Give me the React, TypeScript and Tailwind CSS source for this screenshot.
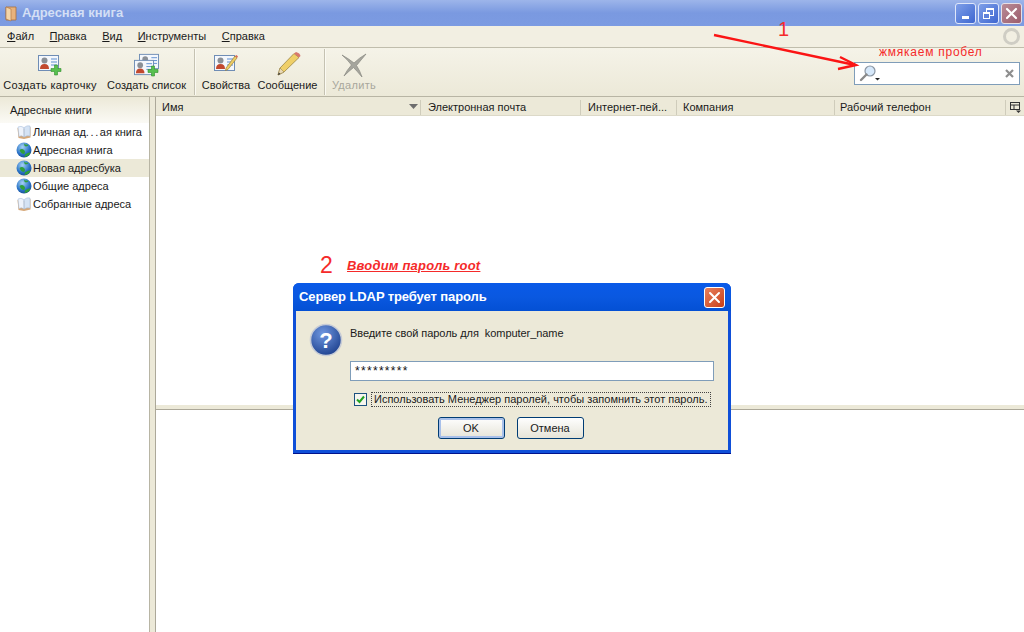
import React from "react";

const font = { fontFamily: '"Liberation Sans", sans-serif' };

function Book() {
  return (
    <svg width="16" height="16" viewBox="0 0 16 16" className="shrink-0">
      <path d="M1.5 4 L8 5 L14.5 3 V13.5 L8 15 L2.5 14 Z" fill="#d6a878" />
      <path d="M2 3 Q5 1.5 7.8 3.5 L8 13 Q5.5 11 3 12.5 Z" fill="#eef3fb" stroke="#a9c0dc" strokeWidth="0.6" />
      <path d="M8.2 3.5 Q11 1 14 2 V12 Q11 11 8.2 13 Z" fill="#d5e3f4" stroke="#a9c0dc" strokeWidth="0.6" />
    </svg>
  );
}

function Globe() {
  return (
    <svg width="16" height="16" viewBox="0 0 16 16" className="shrink-0">
      <defs>
        <radialGradient id="g1" cx="0.4" cy="0.3" r="0.8">
          <stop offset="0" stopColor="#a5d2f5" />
          <stop offset="0.6" stopColor="#2b74c8" />
          <stop offset="1" stopColor="#123f86" />
        </radialGradient>
      </defs>
      <circle cx="8" cy="8" r="7.5" fill="url(#g1)" />
      <path d="M3.5 8 Q6 6 8 8 Q10 10 8 12 Q5 12 3.5 8Z M9 12.5 Q12 10 14.5 10.5 Q13 14.5 8.5 15Z M8 1.5 Q10 3 12 2.6 Q13 4 10 4.5 Q8 4 8 1.5Z" fill="#2fa03a" />
    </svg>
  );
}

function CardIcon({ x = 0 }: { x?: number }) {
  return (
    <g transform={`translate(${x} 0)`}>
      <rect x="0.5" y="2.5" width="20" height="15" fill="#f4f7fc" stroke="#6f8db5" />
      <circle cx="6.5" cy="7.5" r="3" fill="#8a8f96" />
      <path d="M2 16 Q2 11 6.5 11 Q11 11 11 16Z" fill="#c2492f" />
      <path d="M13 6h6M13 9h6M13 12h6" stroke="#5f8fd0" strokeWidth="1" />
    </g>
  );
}

function Plus({ x, y }: { x: number; y: number }) {
  return (
    <path
      transform={`translate(${x} ${y})`}
      d="M3.5 0h3v3.5h3.5v3h-3.5v3.5h-3v-3.5h-3.5v-3h3.5z"
      fill="#58c04e"
      stroke="#2f8f2c"
      strokeWidth="0.6"
    />
  );
}

function NewCard() {
  return (
    <svg width="24" height="24" viewBox="0 0 24 24">
      <CardIcon />
      <Plus x={13} y={12} />
    </svg>
  );
}

function NewList() {
  return (
    <svg width="26" height="24" viewBox="0 0 26 24">
      <g transform="translate(5 -1) scale(0.95)"><CardIcon /></g>
      <g transform="translate(0 5) scale(0.95)"><CardIcon /></g>
      <Plus x={14} y={13} />
    </svg>
  );
}

function Props() {
  return (
    <svg width="24" height="24" viewBox="0 0 24 24">
      <CardIcon />
      <path d="M12 15 L21 3 L23 5 L14 16.5 L11.5 17.5Z" fill="#eccb62" stroke="#8d7430" strokeWidth="0.6" />
      <path d="M21 3 L23 5 L24 3.5 L22.5 2Z" fill="#d86a5a" />
    </svg>
  );
}

function Pencil() {
  return (
    <svg width="26" height="26" viewBox="0 0 26 26">
      <path d="M3 24 L5 17 L19 2.5 L24 6.5 L9 21Z" fill="#efcf68" stroke="#8f7a3a" strokeWidth="0.7" />
      <path d="M5 17 L9 21 L3 24Z" fill="#e9d9b8" stroke="#8f7a3a" strokeWidth="0.5" />
      <path d="M3 24 L3.8 21.5 L5.5 23Z" fill="#333" />
      <path d="M19 2.5 L24 6.5 L25.5 5 Q25 2 21 1Z" fill="#d8786c" />
    </svg>
  );
}

function DelX() {
  return (
    <svg width="26" height="24" viewBox="0 0 26 24">
      <path d="M1 2 Q8 6 13 10 Q18 5 25 1 Q20 7 15.5 12.5 Q19 18 21 24 Q16 18 12.5 14.5 Q8 18 3 23 Q6 17 10.5 12 Q6 6 1 2Z" fill="#a5a59d" stroke="#8e8e86" strokeWidth="0.8" />
    </svg>
  );
}

function Tool({ icon, label, w, disabled, wide }: { icon: React.ReactNode; label: string; w: string; disabled?: boolean; wide?: boolean }) {
  return (
    <div className={`flex flex-col items-center ${w}`}>
      <div className="h-[25px] flex items-end justify-center">{icon}</div>
      <div className={`text-[11px] leading-[13px] mt-[2px] whitespace-nowrap ${wide ? "tracking-[0.3px]" : ""} ${disabled ? "text-[#a8a79c]" : "text-[#1a1a1a]"}`}>{label}</div>
    </div>
  );
}

const Sep = () => <div className="w-[2px] h-[46px] border-l border-[#c5c2b2] bg-[#fbfaf3]" />;

function HeadCell({ label, w, pl }: { label: string; w: string; pl: string }) {
  return (
    <div className={`${w} ${pl} h-full flex items-center relative border-r border-[#cfccbb]`}>
      <span className="text-[11px] text-[#1a1a1a] whitespace-nowrap">{label}</span>
    </div>
  );
}

function TreeRow({ icon, label, sel }: { icon: React.ReactNode; label: React.ReactNode; sel?: boolean }) {
  return (
    <div className={`h-[18px] flex items-center pl-[16px] gap-px ${sel ? "bg-[#ece9d8]" : ""}`}>
      {icon}
      <span className="text-[11px] text-[#1a1a1a] whitespace-nowrap">{label}</span>
    </div>
  );
}

function MenuItem({ u, rest }: { u: string; rest: string }) {
  return (
    <span className="text-[11px] text-[#1a1a1a]">
      <span className="underline">{u}</span>
      {rest}
    </span>
  );
}

export default function App() {
  return (
    <div style={font} className="relative w-[1024px] h-[632px] overflow-hidden bg-white flex flex-col">
      {/* Title bar */}
      <div className="h-[26px] shrink-0 flex items-center pl-[4px] pr-[2px] bg-gradient-to-b from-[#9db5ea] via-[#7a99e0] to-[#7c9be2]">
        <svg width="15" height="17" viewBox="0 0 15 17">
          <path d="M2 2 H12 V15 H2Z" fill="#e8b27c" stroke="#a8703e" strokeWidth="0.8" />
          <path d="M2 2 L7 4 V16 L2 14Z" fill="#f4d4a8" stroke="#a8703e" strokeWidth="0.6" />
        </svg>
        <span className="ml-[3px] text-[13px] font-bold text-[#d3dff5] whitespace-nowrap">Адресная книга</span>
        <div className="ml-auto flex gap-[2px]">
          <div className="w-[21px] h-[21px] rounded-[3px] bg-gradient-to-br from-[#7f9fe8] to-[#3f66d0] border border-[#dfe7fa] flex items-end justify-start pl-[6px] pb-[4px]">
            <div className="w-[7px] h-[3px] bg-white" />
          </div>
          <div className="w-[21px] h-[21px] rounded-[3px] bg-gradient-to-br from-[#7f9fe8] to-[#3f66d0] border border-[#dfe7fa] flex items-center justify-center">
            <svg width="13" height="13" viewBox="0 0 13 13" fill="none" stroke="#fff">
              <rect x="4.5" y="1.5" width="7" height="7" strokeWidth="1" />
              <path d="M4.5 2h7" strokeWidth="2" />
              <rect x="1.5" y="5.5" width="6" height="6" fill="#5f83dc" strokeWidth="1" />
              <path d="M1.5 6h6" strokeWidth="2" />
            </svg>
          </div>
          <div className="w-[21px] h-[21px] rounded-[3px] bg-gradient-to-br from-[#b88c98] to-[#9c5c6c] border border-[#e6dfe6] flex items-center justify-center">
            <svg width="13" height="13" viewBox="0 0 13 13" stroke="#fff" strokeWidth="2.2" strokeLinecap="round">
              <path d="M2 2 L11 11 M11 2 L2 11" />
            </svg>
          </div>
        </div>
      </div>

      {/* Menu */}
      <div className="h-[21px] shrink-0 flex items-center bg-[#f2efe2] pl-[7px] gap-[15.5px] relative">
        <MenuItem u="Ф" rest="айл" />
        <MenuItem u="П" rest="равка" />
        <MenuItem u="В" rest="ид" />
        <MenuItem u="И" rest="нструменты" />
        <MenuItem u="С" rest="правка" />
        <div className="absolute right-[4px] top-[2px] w-[17px] h-[17px] rounded-full border-[3px] border-[#cfcdc4] bg-[#f2efe2]" />
      </div>
      <div className="h-px shrink-0 bg-[#c0bdac]" />

      {/* Toolbar */}
      <div className="h-[49px] shrink-0 flex items-center bg-gradient-to-b from-[#f5f3e8] to-[#ece9d8] border-b border-[#b8b5a4] pr-[4px]">
        <Tool icon={<NewCard />} label="Создать карточку" w="w-[100px]" wide />
        <Tool icon={<NewList />} label="Создать список" w="w-[93px]" />
        <div className="w-[2px] ml-px"><Sep /></div>
        <Tool icon={<Props />} label="Свойства" w="w-[60px]" />
        <Tool icon={<Pencil />} label="Сообщение" w="w-[63px]" />
        <div className="w-[2px] ml-[5px]"><Sep /></div>
        <Tool icon={<DelX />} label="Удалить" w="w-[56px]" disabled wide />
        <div className="ml-auto w-[166px] h-[23px] bg-white border border-[#7f9db9] flex items-center pl-[4px] pr-[5px] mt-[2px]">
          <svg width="22" height="18" viewBox="0 0 22 18">
            <circle cx="11" cy="7" r="5" fill="#d6e8fa" stroke="#8b96a3" strokeWidth="1.2" />
            <path d="M7.5 10.5 L2 16" stroke="#8a8a8a" strokeWidth="2.4" strokeLinecap="round" />
            <path d="M16 14h5l-2.5 2.5z" fill="#222" />
          </svg>
          <svg className="ml-auto" width="9" height="9" viewBox="0 0 9 9" stroke="#8e8e8e" strokeWidth="2.2">
            <path d="M1 1 L8 8 M8 1 L1 8" />
          </svg>
        </div>
      </div>

      {/* Main */}
      <div className="flex-1 flex min-h-0 bg-[#ece9d8]">
        <div className="w-[150px] shrink-0 bg-white flex flex-col border-r border-[#b8b5a4]">
          <div className="h-[26px] shrink-0 bg-gradient-to-b from-[#ece9d8] to-[#fbfaf5] flex items-center pl-[10px] text-[11px] text-[#1a1a1a]">Адресные книги</div>
          <TreeRow icon={<Book />} label={<>Личная ад<span className="tracking-[1.6px]">...</span>ая книга</>} />
          <TreeRow icon={<Globe />} label="Адресная книга" />
          <TreeRow icon={<Globe />} label="Новая адресбука" sel />
          <TreeRow icon={<Globe />} label="Общие адреса" />
          <TreeRow icon={<Book />} label="Собранные адреса" />
        </div>
        <div className="w-[6px] shrink-0 bg-[#ece9d8] border-r border-[#aca899]" />
        <div className="flex-1 flex flex-col min-w-0">
          <div className="h-[19px] shrink-0 bg-[#ece9d8] flex items-center border-b border-[#dcd9c8] pt-[3px]">
            <div className="w-[265px] h-full flex items-center pl-[6px] border-r border-[#cfccbb] relative">
              <span className="text-[11px] text-[#1a1a1a]">Имя</span>
              <svg className="absolute right-[2px] top-[4px]" width="9" height="6" viewBox="0 0 9 6"><path d="M0 0h9L4.5 5z" fill="#6d6d6d" /></svg>
            </div>
            <HeadCell label="Электронная почта" w="w-[160px]" pl="pl-[7px]" />
            <HeadCell label="Интернет-пей..." w="w-[96px]" pl="pl-[7px]" />
            <HeadCell label="Компания" w="w-[158px]" pl="pl-[6px]" />
            <HeadCell label="Рабочий телефон" w="w-[171px]" pl="pl-[5px]" />
            <div className="flex-1 flex items-center justify-center">
              <svg width="11" height="11" viewBox="0 0 11 11" fill="none" stroke="#333"><rect x="0.5" y="0.5" width="9" height="7" /><path d="M0.5 3h9M4 3v5" /><path d="M6 8.5h5L8.5 11z" fill="#333" stroke="none" /></svg>
            </div>
          </div>
          <div className="h-[289px] shrink-0 bg-white" />
          <div className="h-[5px] shrink-0 bg-[#ece9d8] border-b border-[#aca899]" />
          <div className="flex-1 bg-white" />
        </div>
      </div>

      {/* Annotations */}
      <svg className="absolute left-0 top-0 pointer-events-none" width="1024" height="632" fill="none">
        <path d="M714 35 L855 65" stroke="#fb1414" strokeWidth="2.4" />
        <path d="M840 57 L856 65 L838 69" stroke="#fb1414" strokeWidth="2.4" />
      </svg>
      <span className="absolute left-[778px] top-[18px] text-[20px] leading-[23px] text-[#f52a2a]">1</span>
      <span className="absolute left-[879px] top-[45px] text-[12px] leading-[14px] tracking-[0.75px] text-[#f52a2a] whitespace-nowrap">жмякаем пробел</span>
      <span className="absolute left-[320px] top-[252px] text-[23px] leading-[26px] text-[#f52a2a]">2</span>
      <span className="absolute left-[347px] top-[258px] text-[13px] leading-[15px] font-bold italic underline tracking-[0.2px] text-[#f52a2a] whitespace-nowrap">Вводим пароль root</span>

      {/* Dialog */}
      <div className="absolute left-[293px] top-[283px] w-[438px] h-[171px] rounded-t-[6px] bg-[#0f4fd8] flex flex-col p-[3px] pt-0 border-b border-[#00138c]">
        <div className="h-[28px] shrink-0 -mx-[3px] px-[6px] rounded-t-[6px] flex items-center bg-gradient-to-b from-[#0a5ae8] via-[#0a58e0] to-[#0450d4]">
          <span className="text-[13px] font-bold text-white tracking-[-0.1px] whitespace-nowrap">Сервер LDAP требует пароль</span>
          <div className="ml-auto w-[21px] h-[21px] rounded-[3px] border border-white bg-gradient-to-br from-[#e8805c] to-[#c83c14] flex items-center justify-center">
            <svg width="13" height="13" viewBox="0 0 13 13" stroke="#fff" strokeWidth="2" strokeLinecap="round">
              <path d="M2 2 L11 11 M11 2 L2 11" />
            </svg>
          </div>
        </div>
        <div className="flex-1 bg-[#ece9d8] flex flex-col pl-[13px] pr-[14px] pt-[12px]">
          <div className="flex items-start">
            <svg width="34" height="34" viewBox="0 0 34 34" className="shrink-0">
              <defs>
                <radialGradient id="q" cx="0.4" cy="0.3" r="0.8">
                  <stop offset="0" stopColor="#6f97e0" />
                  <stop offset="1" stopColor="#173a88" />
                </radialGradient>
              </defs>
              <circle cx="17" cy="17" r="15.5" fill="url(#q)" stroke="#c7ccd6" strokeWidth="1.6" />
              <text x="17" y="24.5" textAnchor="middle" fontSize="22" fontWeight="700" fill="#fff" fontFamily="Liberation Sans">?</text>
            </svg>
            <div className="ml-[7px] pt-[4px] text-[11px] leading-[13px] tracking-[-0.06px] text-[#1a1a1a] whitespace-pre">Введите свой пароль для  komputer_name</div>
          </div>
          <div className="ml-[41px] mt-[4px] w-[364px] h-[20px] shrink-0 bg-white border border-[#7f9db9] flex items-center pl-[4px] text-[12px] tracking-[1.3px] text-[#111]">*********</div>
          <div className="ml-[41px] mt-[11px] flex items-center">
            <div className="ml-[4px] w-[13px] h-[13px] border border-[#1c5180] bg-[#f6f5ee] flex items-center justify-center">
              <svg width="9" height="9" viewBox="0 0 9 9" fill="none" stroke="#21a121" strokeWidth="2"><path d="M1 4.5 L3.5 7 L8 1.5" /></svg>
            </div>
            <span className="ml-[4px] px-[2px] h-[15px] flex items-center border border-dotted border-[#444] text-[11px] text-[#1a1a1a] whitespace-nowrap">Использовать Менеджер паролей, чтобы запомнить этот пароль.</span>
          </div>
          <div className="flex justify-center gap-[12px] mt-[10px] pr-[2px]">
            <div className="w-[67px] h-[22px] rounded-[3px] border border-[#003c74] bg-gradient-to-b from-[#fefefe] to-[#e6e4d8] shadow-[inset_0_0_0_2px_#a8c0ea] flex items-center justify-center text-[11px] text-[#1a1a1a]">OK</div>
            <div className="w-[67px] h-[22px] rounded-[3px] border border-[#003c74] bg-gradient-to-b from-[#fefefe] to-[#e6e4d8] flex items-center justify-center text-[11px] text-[#1a1a1a]">Отмена</div>
          </div>
        </div>
      </div>
    </div>
  );
}
